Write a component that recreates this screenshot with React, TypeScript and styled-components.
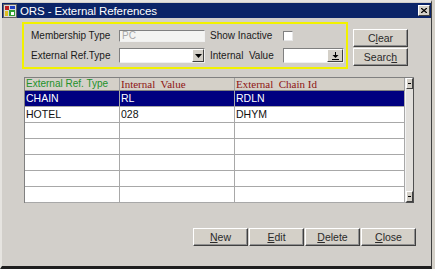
import styled, { createGlobalStyle } from 'styled-components';

const GlobalStyle = createGlobalStyle`
  html, body {
    margin: 0;
    padding: 0;
    background: #d4d0c8;
  }
  body {
    font-family: "Liberation Sans", Arial, sans-serif;
  }
`;

const Frame = styled.div`
  width: 432px;
  height: 269px;
  box-sizing: border-box;
  background: #d2cfca;
  border-top: 2px solid #e6e4e0;
  border-left: 2px solid #e6e4e0;
  border-right: 1px solid #404040;
  border-bottom: 3px solid #1e1e1e;
  display: flex;
  flex-direction: column;
  overflow: hidden;
`;

const TitleBar = styled.div`
  height: 15px;
  margin-top: 1px;
  background: #0b2468;
  display: flex;
  align-items: center;
  padding: 0 1px 0 1px;
  gap: 3px;
`;

const TitleText = styled.span`
  flex: 1;
  color: #ffffff;
  font-size: 11.5px;
  letter-spacing: -0.1px;
`;

const CloseBox = styled.div`
  width: 10px;
  height: 9px;
  background: #d4d0c8;
  border-top: 1px solid #ffffff;
  border-left: 1px solid #ffffff;
  border-right: 1px solid #404040;
  border-bottom: 1px solid #404040;
  display: flex;
  align-items: center;
  justify-content: center;
`;

const Body = styled.div`
  padding: 4px 0 0 20px;
  display: flex;
  flex-direction: column;
`;

const TopRow = styled.div`
  display: flex;
  align-items: flex-start;
  gap: 5px;
`;

const FilterBox = styled.div`
  width: 326px;
  height: 47px;
  box-sizing: border-box;
  border: 2px solid #f2f200;
  padding: 5px 0 0 7px;
  display: grid;
  grid-template-columns: 88px 86px 5px 73px 61px;
  grid-template-rows: 13px 15px;
  row-gap: 6px;
  align-items: center;
`;

const Label = styled.span`
  font-size: 10px;
  color: #1a1a1a;
  white-space: pre;
`;

const TextField = styled.div<{ $disabled?: boolean }>`
  height: 12px;
  box-sizing: border-box;
  background: ${(p) => (p.$disabled ? '#f4f4f2' : '#ffffff')};
  border-top: 1px solid #808080;
  border-left: 1px solid #808080;
  border-right: 1px solid #f0f0f0;
  border-bottom: 1px solid #f0f0f0;
  color: #a8a8a8;
  font-size: 10px;
  line-height: 10px;
  padding-left: 2px;
`;

const ComboField = styled.div<{ $w: number }>`
  width: ${(p) => p.$w}px;
  height: 15px;
  box-sizing: border-box;
  display: flex;
  background: #ffffff;
  border-top: 1px solid #808080;
  border-left: 1px solid #808080;
  border-right: 1px solid #f0f0f0;
  border-bottom: 1px solid #f0f0f0;
`;

const ComboInput = styled.div`
  flex: 1;
`;

const ComboButton = styled.div<{ $w: number }>`
  width: ${(p) => p.$w}px;
  box-sizing: border-box;
  background: #d4d0c8;
  border-top: 1px solid #ffffff;
  border-left: 1px solid #ffffff;
  border-right: 1px solid #404040;
  border-bottom: 1px solid #404040;
  display: flex;
  align-items: center;
  justify-content: center;
`;

const InlineCombo = styled.div`
  display: flex;
  align-items: center;
`;

const Check = styled.div`
  width: 8px;
  height: 8px;
  background: #ffffff;
  border-top: 1px solid #808080;
  border-left: 1px solid #808080;
  border-right: 1px solid #e8e8e8;
  border-bottom: 1px solid #e8e8e8;
`;

const SideButtons = styled.div`
  margin-top: 7px;
  display: flex;
  flex-direction: column;
  gap: 1px;
`;

const Button = styled.div`
  width: 55px;
  height: 18px;
  box-sizing: border-box;
  background: #d4d0c8;
  border-top: 1px solid #ffffff;
  border-left: 1px solid #ffffff;
  border-right: 1px solid #404040;
  border-bottom: 1px solid #404040;
  box-shadow: inset -1px -1px 0 #909090;
  display: flex;
  align-items: center;
  justify-content: center;
  font-size: 10.5px;
  color: #2a2a2a;
`;

const Table = styled.div`
  margin: 8px 0 0 2px;
  width: 390px;
  height: 126px;
  box-sizing: border-box;
  display: flex;
  border-top: 1px solid #808080;
  border-left: 1px solid #808080;
`;

const Grid = styled.div`
  width: 380px;
  display: grid;
  grid-template-columns: 95px 115px 170px;
  grid-template-rows: 13px repeat(7, 16px);
  background: #ffffff;
`;

const HeadCell = styled.div<{ $serif?: boolean; $color: string }>`
  background: #d4d0c8;
  border-right: 1px solid #a0a0a0;
  border-bottom: 1px solid #808080;
  padding-left: 1px;
  font-family: ${(p) =>
    p.$serif ? '"Liberation Serif", "Times New Roman", serif' : '"Liberation Sans", Arial, sans-serif'};
  font-size: ${(p) => (p.$serif ? '11px' : '10px')};
  color: ${(p) => p.$color};
  line-height: 12px;
  white-space: pre;
  overflow: hidden;
`;

const Cell = styled.div<{ $sel?: boolean }>`
  background: ${(p) => (p.$sel ? '#000080' : '#ffffff')};
  color: ${(p) => (p.$sel ? '#ffffff' : '#111111')};
  border-right: 1px solid #a8a8a8;
  border-bottom: 1px solid #a8a8a8;
  padding-left: 1px;
  font-size: 10.5px;
  line-height: 15px;
`;

const ScrollBar = styled.div`
  width: 10px;
  display: flex;
  flex-direction: column;
  background: #e2e0dc;
  border-left: 1px solid #f4f4f4;
  border-right: 1px solid #505050;
  border-bottom: 1px solid #505050;
`;

const ScrollArrow = styled.div`
  height: 11px;
  box-sizing: border-box;
  background: #d4d0c8;
  border-top: 1px solid #ffffff;
  border-left: 1px solid #ffffff;
  border-right: 1px solid #404040;
  border-bottom: 1px solid #404040;
  display: flex;
  align-items: center;
  justify-content: center;
`;

const Track = styled.div`
  flex: 1;
`;

const Dot = styled.div`
  width: 3px;
  height: 1px;
  background: #000000;
`;

const BottomRow = styled.div`
  margin-top: 25px;
  padding-right: 15px;
  display: flex;
  justify-content: flex-end;
  gap: 1px;
`;

const Hot = styled.span`
  text-decoration: underline;
`;

function AppIcon() {
  return (
    <svg width="14" height="14" viewBox="0 0 14 14">
      <rect x="0.5" y="0.5" width="13" height="13" fill="#d8d8d8" stroke="#606060" />
      <rect x="2" y="2" width="4" height="4" fill="#c02020" />
      <rect x="7" y="2" width="5" height="3" fill="#2040c0" />
      <rect x="2" y="7" width="3" height="5" fill="#e0c020" />
      <rect x="6" y="6" width="6" height="6" fill="#30a030" />
      <rect x="8" y="8" width="3" height="3" fill="#ffffff" />
    </svg>
  );
}

function DownTri() {
  return (
    <svg width="7" height="4" viewBox="0 0 7 4">
      <path d="M0 0h7L3.5 4z" fill="#000" />
    </svg>
  );
}

function DownArrowBar() {
  return (
    <svg width="7" height="8" viewBox="0 0 7 8">
      <rect x="3" y="0" width="1" height="4" fill="#000" />
      <path d="M0.5 3h6L3.5 6z" fill="#000" />
      <rect x="0" y="7" width="7" height="1" fill="#000" />
    </svg>
  );
}

const rows: [string, string, string][] = [
  ['CHAIN', 'RL', 'RDLN'],
  ['HOTEL', '028', 'DHYM'],
  ['', '', ''],
  ['', '', ''],
  ['', '', ''],
  ['', '', ''],
  ['', '', ''],
];

export default function App() {
  return (
    <>
      <GlobalStyle />
      <Frame>
        <TitleBar>
          <AppIcon />
          <TitleText>ORS - External References</TitleText>
          <CloseBox>
            <svg width="6" height="5" viewBox="0 0 6 5">
              <path d="M0 0L6 5M6 0L0 5" stroke="#000" strokeWidth="1.3" />
            </svg>
          </CloseBox>
        </TitleBar>
        <Body>
          <TopRow>
            <FilterBox>
              <Label>Membership Type</Label>
              <TextField $disabled>PC</TextField>
              <span />
              <Label>Show Inactive</Label>
              <Check />
              <Label>External Ref.Type</Label>
              <ComboField $w={86}>
                <ComboInput />
                <ComboButton $w={12}>
                  <DownTri />
                </ComboButton>
              </ComboField>
              <span />
              <Label>Internal  Value</Label>
              <InlineCombo>
                <ComboField $w={61}>
                  <ComboInput />
                  <ComboButton $w={16}>
                    <DownArrowBar />
                  </ComboButton>
                </ComboField>
              </InlineCombo>
            </FilterBox>
            <SideButtons>
              <Button>
                C<Hot>l</Hot>ear
              </Button>
              <Button>
                Searc<Hot>h</Hot>
              </Button>
            </SideButtons>
          </TopRow>
          <Table>
            <Grid>
              <HeadCell $color="#22912a">External Ref. Type</HeadCell>
              <HeadCell $serif $color="#8e1414">Internal  Value</HeadCell>
              <HeadCell $serif $color="#8e1414">External  Chain Id</HeadCell>
              {rows.map((r, i) =>
                r.map((v, j) => (
                  <Cell key={`${i}-${j}`} $sel={i === 0}>
                    {v}
                  </Cell>
                ))
              )}
            </Grid>
            <ScrollBar>
              <ScrollArrow>
                <Dot />
              </ScrollArrow>
              <Track />
              <ScrollArrow>
                <Dot />
              </ScrollArrow>
            </ScrollBar>
          </Table>
          <BottomRow>
            <Button>
              <Hot>N</Hot>ew
            </Button>
            <Button>
              <Hot>E</Hot>dit
            </Button>
            <Button>
              <Hot>D</Hot>elete
            </Button>
            <Button>
              <Hot>C</Hot>lose
            </Button>
          </BottomRow>
        </Body>
      </Frame>
    </>
  );
}
